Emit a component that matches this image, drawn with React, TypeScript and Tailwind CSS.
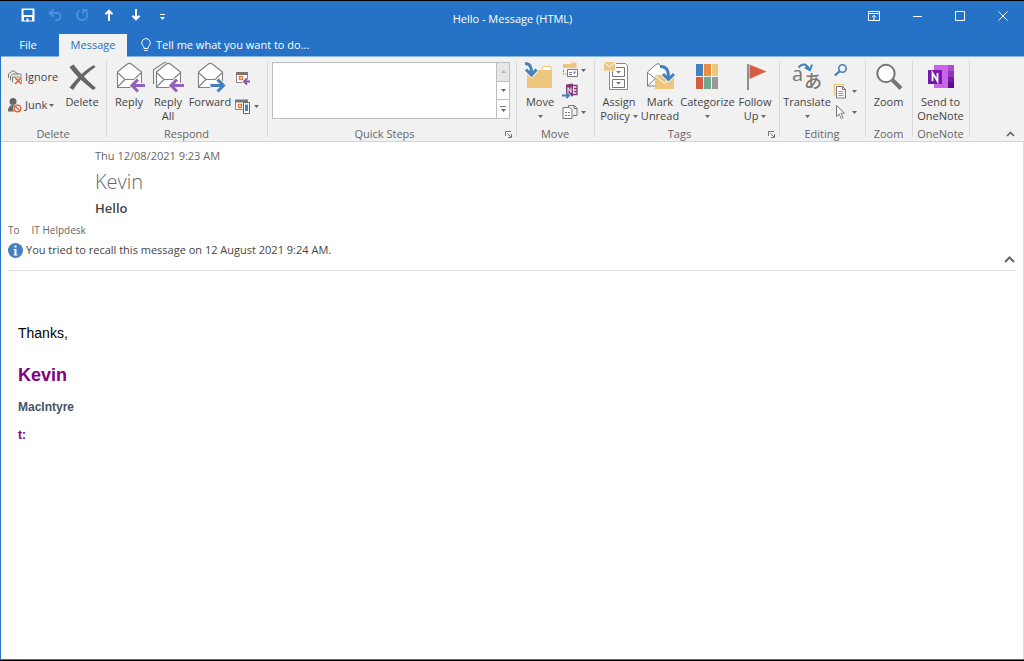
import { ReactNode } from 'react';

function Caret({ className = '' }: { className?: string }) {
  return (
    <svg viewBox="0 0 5 3" className={`w-[5px] h-[3px] shrink-0 ${className}`} fill="#666">
      <path d="M0 0h5L2.5 3z" />
    </svg>
  );
}

function Svg({ children, className = 'size-8' }: { children: ReactNode; className?: string }) {
  return (
    <svg viewBox="0 0 32 32" className={`${className} shrink-0 overflow-visible`} fill="none" aria-hidden="true">
      {children}
    </svg>
  );
}

function Small({ children, className = 'size-4' }: { children: ReactNode; className?: string }) {
  return (
    <svg viewBox="0 0 16 16" className={`${className} shrink-0`} fill="none" aria-hidden="true">
      {children}
    </svg>
  );
}

function Envelope() {
  return (
    <g stroke="#808080" strokeWidth="1.1" strokeLinejoin="round">
      <path d="M4.5 11 14 3.2q2.3-1.7 4.6 0L28.5 11v15.5h-24z" fill="#fff" />
      <path d="M4.5 11.5 12 18.5h9l7.5-7" />
      <path d="m4.5 26 7.5-7.5" />
    </g>
  );
}

function LeftArrow() {
  return (
    <>
      <path d="M32 24.500H19M25 18.500l-6 6 6 6" stroke="#f1f1f1" strokeWidth="5" />
      <path d="M32 24.500H19.500M25 18.500l-6 6 6 6" stroke="#9461b8" strokeWidth="3" />
    </>
  );
}

type BigProps = {
  icon: ReactNode;
  lines: string[];
  caret?: 'below' | 'inline';
  className: string;
};

function BigButton({ icon, lines, caret, className }: BigProps) {
  return (
    <button className={`flex flex-col items-center shrink-0 pt-1 hover:bg-[#c5c5c5] ${className}`}>
      {icon}
      <span className="mt-[2px] leading-[14px] text-center whitespace-nowrap">
        {lines.map((line, i) => (
          <span key={line} className="flex items-center justify-center gap-[3px]">
            {line}
            {caret === 'inline' && i === lines.length - 1 && <Caret />}
          </span>
        ))}
      </span>
      {caret === 'below' && <Caret className="mt-[6px]" />}
    </button>
  );
}

function SmallButton({ label, children, caret }: { label: string; children: ReactNode; caret?: boolean }) {
  return (
    <button aria-label={label} className="flex items-center gap-[3px] hover:bg-[#c5c5c5]">
      {children}
      {caret && <Caret />}
    </button>
  );
}

function Launcher({ label }: { label: string }) {
  return (
    <button aria-label={label} className="absolute right-[5px] bottom-[3px]">
      <svg viewBox="0 0 7 7" className="size-[7px]" fill="none" stroke="#777">
        <path d="M.5 5V.5H6M2.5 2.500 6 6M6.500 3v3.500H3" />
      </svg>
    </button>
  );
}

function Group({ title, className, launcher, children }: { title: string; className: string; launcher?: boolean; children: ReactNode }) {
  return (
    <section aria-label={title} className={`relative flex flex-col shrink-0 pr-[2px] ${className}`}>
      <div className="flex h-[70px]">{children}</div>
      <h2 className={`text-center leading-[14px] text-[#666] ${launcher ? 'pr-[14px]' : ''}`}>{title}</h2>
      {launcher && <Launcher label={`${title} options`} />}
      <div className="absolute right-0 top-1 bottom-1 w-px bg-[#d8d8d8]" />
    </section>
  );
}

function TitleBar() {
  const quick = 'flex items-center justify-center w-[27px] h-7';
  const control = 'flex items-center justify-center w-[43px] h-[30px]';
  return (
    <header className="grid grid-cols-[1fr_auto_1fr] h-[33px] text-white">
      <div className="flex pl-[13px]">
        <button aria-label="Save" className={quick}>
          <svg viewBox="0 0 14 14" className="size-[14px]" fill="none">
            <path d="M.5.500h13v13h-13z" fill="#fff" />
            <path d="M2.500 2h9v5h-9zM3 9h8v3.500H3z" fill="#2572c6" />
            <path d="M5.500 10.500h2v3h-2z" fill="#fff" />
          </svg>
        </button>
        <button aria-label="Undo" className={quick} disabled>
          <svg viewBox="0 0 14 14" className="size-[14px]" fill="none" stroke="#4a93dc" strokeWidth="1.800">
            <path d="M5.500 1.500 1.500 5l4 3.500M2 5h7a3.500 3.500 0 0 1 0 7H7.500" />
          </svg>
        </button>
        <button aria-label="Redo" className={quick} disabled>
          <svg viewBox="0 0 14 14" className="size-[14px]" fill="none" stroke="#4a93dc" strokeWidth="1.800">
            <path d="M4.500 2.500A5.200 5.200 0 1 0 10 2.700M8 6V2h4.500" />
          </svg>
        </button>
        <button aria-label="Previous item" className={quick}>
          <svg viewBox="0 0 12 12" className="size-3" fill="none" stroke="#fff" strokeWidth="2">
            <path d="M6 12V1.500M2.500 5.200 6 1.700l3.500 3.500" />
          </svg>
        </button>
        <button aria-label="Next item" className={quick}>
          <svg viewBox="0 0 12 12" className="size-3" fill="none" stroke="#fff" strokeWidth="2">
            <path d="M6 0v10.500M2.500 6.800 6 10.300l3.500-3.500" />
          </svg>
        </button>
        <button aria-label="Customize Quick Access Toolbar" className={quick}>
          <svg viewBox="0 0 5 6" className="mt-1 w-[5px] h-[6px]" fill="#fff">
            <path d="M0 0h5v1H0zM0 3h5L2.500 6z" />
          </svg>
        </button>
      </div>
      <h1 className="leading-9">Hello - Message (HTML)</h1>
      <div className="flex justify-end">
        <button aria-label="Ribbon display options" className={control}>
          <svg viewBox="0 0 12 10" className="w-3 h-[10px]" fill="none" stroke="#fff">
            <path d="M.5.5h11v9H.500zM.5 2.500h11M6 9V4.500M4 6.200l2-2 2 2" />
          </svg>
        </button>
        <button aria-label="Minimize" className={control}>
          <svg viewBox="0 0 10 10" className="size-[10px]" stroke="#fff">
            <path d="M1 5.500h9" />
          </svg>
        </button>
        <button aria-label="Maximize" className={control}>
          <svg viewBox="0 0 10 10" className="size-[10px]" fill="none" stroke="#fff">
            <path d="M.5.5h9v9H.500z" />
          </svg>
        </button>
        <button aria-label="Close" className={control}>
          <svg viewBox="0 0 10 10" className="size-[10px]" stroke="#fff">
            <path d="m.5.500 9 9M9.500.500l-9 9" />
          </svg>
        </button>
      </div>
    </header>
  );
}

function Tabs() {
  return (
    <nav className="flex h-[23px] text-white">
      <button className="w-[58px] pr-1 border-b border-[#8ab4e3]">File</button>
      <button className="w-[68px] bg-[#f1f1f1] text-[#2572c6]">Message</button>
      <button className="flex items-center flex-1 gap-1 pl-[13px] border-b border-[#8ab4e3]">
        <svg viewBox="0 0 12 14" className="w-3 h-[14px]" fill="none" stroke="#fff">
          <path d="M4 10.500V9C3 8 1.800 6.800 1.800 4.800a4.200 4.200 0 0 1 8.400 0C10.200 6.800 9 8 8 9v1.500zM4.300 12.500h3.400" />
        </svg>
        Tell me what you want to do...
      </button>
    </nav>
  );
}

function DeleteGroup() {
  return (
    <Group title="Delete" className="w-[106px]">
      <div className="flex flex-col shrink-0 w-[59px] pl-[6px] pt-3 gap-3">
        <button className="flex items-center gap-[2px] h-4">
          <Small>
            <path d="M1.500 9V5L6 1.500l5 3.500" stroke="#777" />
            <path d="M3.500 11.500V7l2-2h8l1 2" stroke="#777" />
            <path d="M5.500 13.500V8h9v5" stroke="#777" />
            <path d="m8 8.500 6.500 6.500M14.500 8.500 8 15" stroke="#f1f1f1" strokeWidth="3" />
            <path d="m8 8.500 6.500 6.500M14.500 8.500 8 15" stroke="#d9603b" strokeWidth="1.600" />
          </Small>
          Ignore
        </button>
        <button className="flex items-center gap-[2px] h-4">
          <Small>
            <circle cx="6" cy="4.500" r="3.500" fill="#666" />
            <path d="M1 14.500q0-6.500 5-6.500 3 0 4 1.500L7 14.500z" fill="#666" />
            <circle cx="10.500" cy="11.500" r="4.500" fill="#f1f1f1" />
            <circle cx="10.500" cy="11.500" r="3.300" stroke="#d9603b" strokeWidth="1.300" />
            <path d="m8.200 9.200 4.600 4.600" stroke="#d9603b" strokeWidth="1.300" />
          </Small>
          Junk
          <Caret />
        </button>
      </div>
      <BigButton
        className="w-[44px]"
        lines={['Delete']}
        icon={
          <Svg>
            <path d="M3.500 6 7.500 3.500C12 9.500 20 18 30 27l-3 2C18 22 9 14 3.500 6z" fill="#666" />
            <path d="M28 4C19 9 11 17 3.500 26.500L7 29C13 20 20 12.500 29.500 6z" fill="#666" />
          </Svg>
        }
      />
    </Group>
  );
}

function RespondGroup() {
  return (
    <Group title="Respond" className="w-[161px]">
      <BigButton className="w-[40px] ml-[2px]" lines={['Reply']} icon={<Svg><Envelope /><LeftArrow /></Svg>} />
      <BigButton
        className="w-[38px]"
        lines={['Reply', 'All']}
        icon={
          <Svg>
            <path d="M1.500 23V8.500L12.500 1.500q1-.6 2 0" stroke="#808080" strokeWidth="1.1" />
            <Envelope />
            <LeftArrow />
          </Svg>
        }
      />
      <BigButton
        className="w-[46px]"
        lines={['Forward']}
        icon={
          <Svg>
            <Envelope />
            <path d="M16 24.500h13M23.500 18.500l6 6-6 6" stroke="#f1f1f1" strokeWidth="5" />
            <path d="M16.500 24.500H29M23.500 18.500l6 6-6 6" stroke="#4380bd" strokeWidth="3" />
          </Svg>
        }
      />
      <div className="flex flex-col items-start gap-3 pl-[2px] pt-[13px]">
        <SmallButton label="Reply with meeting">
          <Small>
            <path d="M1.500 3.500h11v9h-11z" fill="#fff" stroke="#888" />
            <path d="M1 2h12v3H1z" fill="#777" />
            <path d="M4.500 6.500h3v3h-3z" stroke="#e07b39" strokeWidth="1.400" />
            <path d="M15 11.500H9M12 8.500l-3 3 3 3" stroke="#f1f1f1" strokeWidth="3.500" />
            <path d="M15 11.500H9M12 8.500l-3 3 3 3" stroke="#8c50b0" strokeWidth="1.800" />
          </Small>
        </SmallButton>
        <SmallButton label="More respond actions" caret>
          <Small>
            <path d="M.5 2.500h12v9H.500z" fill="#fff" stroke="#888" />
            <path d="M0 1.500h13v3H0z" fill="#777" />
            <path d="M3.500 6.500h3v3h-3z" stroke="#e07b39" strokeWidth="1.400" />
            <path d="M8.500 4.500h6v11h-6z" fill="#fff" stroke="#666" />
            <path d="M10 6.500h3v6.500h-3z" fill="#4380bd" />
          </Small>
        </SmallButton>
      </div>
    </Group>
  );
}

function QuickStepsGroup() {
  const step = 'flex flex-col items-center justify-center flex-1 gap-[2px] border-l border-[#b9bfc2]';
  return (
    <Group title="Quick Steps" className="w-[249px]" launcher>
      <div className="flex flex-1 mt-[5px] mb-2 ml-1 mr-[5px] border border-[#b9bfc2] bg-white">
        <div className="flex-1" />
        <div className="flex flex-col w-[13px]">
          <button aria-label="Scroll up" className={`${step} bg-[#e6e6e6]`} disabled>
            <svg viewBox="0 0 5 3" className="w-[5px] h-[3px]" fill="#b5b5b5"><path d="M0 3h5L2.500 0z" /></svg>
          </button>
          <button aria-label="Scroll down" className={`${step} border-t`}><Caret /></button>
          <button aria-label="More quick steps" className={`${step} border-t`}>
            <span className="w-[6px] h-px bg-[#777]" />
            <Caret />
          </button>
        </div>
      </div>
    </Group>
  );
}

function MoveGroup() {
  return (
    <Group title="Move" className="w-[78px]">
      <BigButton
        className="w-[42px] ml-[2px]"
        lines={['Move']}
        caret="below"
        icon={
          <Svg>
            <path d="M3 9h14l2-4h8l1 3v19H3z" fill="#edc77e" />
            <path d="M18 9l1.500-3H26l1 3z" fill="#fff" />
            <path d="M1 2.500q7 0 6.500 9M2 8.500l5.500 5.500 5-5.500" stroke="#f1f1f1" strokeWidth="5" />
            <path d="M1 2.500q7 0 6.500 10M2 8.500l5.500 5.500 5-5.500" stroke="#4380bd" strokeWidth="3" />
          </Svg>
        }
      />
      <div className="flex flex-col items-start gap-[5px] pt-[5px] pl-[1px]">
        <SmallButton label="Rules" caret>
          <Small>
            <path d="M1 2h8l1-1.500h4.500V6H1z" fill="#edc77e" />
            <path d="M1.500 8v4h3" stroke="#888" strokeDasharray="2 1" />
            <path d="M5.500 7.500h10v7h-10z" fill="#fff" stroke="#777" />
            <path d="M11.500 9.500h2v2h-2z" fill="#4380bd" />
            <path d="M7 10.500h3M7 12.500h3" stroke="#888" />
          </Small>
        </SmallButton>
        <SmallButton label="Send to OneNote">
          <Small>
            <path d="M9.500 2.500H15v9H9.500M12 5.500h3M12 8.500h3" stroke="#80397b" strokeWidth="1.300" />
            <path d="m4 1.500 7-1v13l-7-1z" fill="#80397b" />
            <path d="M6 9.500v-5l3 5v-5" stroke="#fff" />
            <path d="M0 12.500h7M4.500 10l2.500 2.500L4.500 15" stroke="#f1f1f1" strokeWidth="3" />
            <path d="M0 12.500h7M4.500 10l2.500 2.500L4.500 15" stroke="#4380bd" strokeWidth="1.800" />
          </Small>
        </SmallButton>
        <SmallButton label="Actions" caret>
          <Small>
            <path d="M6.500 3.500v-2h6l2.500 3v7h-4M12 1.500v3h3" stroke="#777" />
            <path d="M1 3.500h6.500l2.500 2v9H1z" fill="#fff" stroke="#777" />
            <path d="M3 8.500h2M6 8.500h2M3 11.500h2M6 11.500h2" stroke="#777" />
          </Small>
        </SmallButton>
      </div>
    </Group>
  );
}

function TagsGroup() {
  return (
    <Group title="Tags" className="w-[185px]" launcher>
      <BigButton
        className="w-[44px] ml-[2px]"
        lines={['Assign', 'Policy']}
        caret="inline"
        icon={
          <Svg>
            <path d="M6.500 2.500h16l2 2v24h-18z" fill="#fff" stroke="#888" />
            <path d="M9.500 6.500h12v9h-12zM9.500 18.500h12v8h-12z" stroke="#777" />
            <path d="M13 10h5l-2.500 2.500zM13 21h5l-2.500 2.500z" fill="#777" />
            <path d="M0 0h13v10.500H0z" fill="#f1f1f1" />
            <path d="M1 1h11v8.500H1z" fill="#edc77e" />
            <path d="m1 1.500 5.500 4.500L12 1.500" stroke="#fff" />
          </Svg>
        }
      />
      <BigButton
        className="w-[38px]"
        lines={['Mark', 'Unread']}
        icon={
          <Svg>
            <path d="M3.500 11 12 3.500q2-1.700 4 0l8 7V25H3.500z" fill="#fff" stroke="#808080" />
            <path d="m3.500 11.500 7.500 6M3.500 25l7.500-7" stroke="#808080" />
            <path d="M11 14h19v14H11z" fill="#edc77e" />
            <path d="m11 14.500 9.500 8 9.500-8" stroke="#fff" />
            <path d="M16 5.500q8.500-1 8.500 10M19 13l5.500 5.500L30 13" stroke="#f1f1f1" strokeWidth="4.500" />
            <path d="M16 5.500q8.500-1 8.500 11M19 13l5.500 5.500L30 13" stroke="#4380bd" strokeWidth="3" />
          </Svg>
        }
      />
      <BigButton
        className="w-[57px]"
        lines={['Categorize']}
        caret="below"
        icon={
          <Svg>
            <path d="M4 3h7v12H4z" fill="#4380bd" />
            <path d="M12 3h7v12h-7z" fill="#e98c3f" />
            <path d="M20 3h6v12h-6z" fill="#edc77e" />
            <path d="M4 16h7v12H4z" fill="#d65f43" />
            <path d="M12 16h7v12h-7z" fill="#6ca892" />
            <path d="M20 16h6v12h-6z" fill="#999" />
          </Svg>
        }
      />
      <BigButton
        className="w-[38px]"
        lines={['Follow', 'Up']}
        caret="inline"
        icon={
          <Svg>
            <path d="M9 3v26" stroke="#777" strokeWidth="1.600" />
            <path d="m10.500 3.500 17 7-17 7.500z" fill="#d65f43" />
          </Svg>
        }
      />
    </Group>
  );
}

function EditingGroup() {
  return (
    <Group title="Editing" className="w-[86px]">
      <BigButton
        className="w-[50px] ml-[2px]"
        lines={['Translate']}
        caret="below"
        icon={
          <Svg>
            <text x="1" y="20" fontSize="20" fill="#777" fontFamily="Open Sans, sans-serif">a</text>
            <text x="13" y="27" fontSize="18" fill="#777" fontWeight="500" fontFamily="Noto Sans CJK JP, sans-serif">あ</text>
            <path d="M7.500 6.500q6-7 11 2M14 6.500l5 2.500 2-5.500" stroke="#4380bd" strokeWidth="2" />
          </Svg>
        }
      />
      <div className="flex flex-col items-start gap-[5px] pt-[5px] pl-[1px]">
        <SmallButton label="Find">
          <Small>
            <circle cx="9.500" cy="6.500" r="3.700" stroke="#4380bd" strokeWidth="1.600" />
            <path d="m6.800 9.200-5 4.300" stroke="#4380bd" strokeWidth="2.200" />
          </Small>
        </SmallButton>
        <SmallButton label="Related" caret>
          <Small>
            <path d="M1.500 13V1.500h9V3" stroke="#edc77e" strokeWidth="1.200" />
            <path d="M3.500 3.500h6l3 3v8.500h-9zM9.500 3.500v3h3" fill="#fff" stroke="#777" />
            <path d="M5.500 8.500h5M5.500 10.500h5M5.500 12.500h5" stroke="#999" />
          </Small>
        </SmallButton>
        <SmallButton label="Select" caret>
          <Small>
            <path d="M3.500 1.500v11l2.700-2.500 2 4.500 1.800-1-2-4.300h3.500z" fill="#fff" stroke="#777" />
          </Small>
        </SmallButton>
      </div>
    </Group>
  );
}

function Ribbon() {
  return (
    <div className="flex bg-[#f1f1f1] border-b border-[#d5d5d5] text-[#444]">
      <DeleteGroup />
      <RespondGroup />
      <QuickStepsGroup />
      <MoveGroup />
      <TagsGroup />
      <EditingGroup />
      <Group title="Zoom" className="w-[47px]">
        <BigButton
          className="flex-1"
          lines={['Zoom']}
          icon={
            <Svg>
              <circle cx="13" cy="12.500" r="8.700" fill="#fff" stroke="#777" strokeWidth="2" />
              <path d="m19.500 19 8.500 8.500" stroke="#777" strokeWidth="4" />
            </Svg>
          }
        />
      </Group>
      <Group title="OneNote" className="w-[57px]">
        <BigButton
          className="flex-1"
          lines={['Send to', 'OneNote']}
          icon={
            <Svg>
              <path d="M9 4h14v23H9z" fill="#ca64ea" />
              <path d="M23 4h6v6h-6z" fill="#ae4bd5" />
              <path d="M23 10h6v6h-6z" fill="#9332bf" />
              <path d="M23 16h6v5h-6z" fill="#7719aa" />
              <path d="M23 21h6v6h-6z" fill="#5c1187" />
              <path d="M3 9h14v14H3z" fill="#7719aa" />
              <path d="M7.500 20v-8l5 8v-8" stroke="#fff" strokeWidth="1.800" />
            </Svg>
          }
        />
      </Group>
      <div className="flex flex-1 items-end justify-end pr-[9px] pb-1">
        <button aria-label="Collapse the ribbon">
          <svg viewBox="0 0 9 6" className="w-[9px] h-[6px]" fill="none" stroke="#666" strokeWidth="1.700">
            <path d="m1 5 3.500-3.500L8 5" />
          </svg>
        </button>
      </div>
    </div>
  );
}

function MessageHeader() {
  return (
    <div className="mx-[7px] pt-[6px] pb-[7px] border-b border-[#e1e1e1] text-[#666]">
      <div className="pl-[87px]">
        <p className="leading-4">Thu 12/08/2021 9:23 AM</p>
        <p className="mt-1 text-[20px] leading-7 font-light">Kevin</p>
        <p className="mt-[2px] text-[13px] leading-5 font-semibold text-[#444]">Hello</p>
      </div>
      <dl className="flex gap-3 mt-1 text-[10px] leading-4">
        <dt>To</dt>
        <dd>IT Helpdesk</dd>
      </dl>
      <div className="flex justify-between h-[21px] mt-1">
        <p className="flex items-center gap-[3px] h-4 text-[#444]">
          <svg viewBox="0 0 15 15" className="size-[15px]">
            <circle cx="7.500" cy="7.500" r="7.500" fill="#4380bd" />
            <path d="M6.500 2.500h2v2h-2zM5.500 6h3v5.500h1v1h-4v-1h1V7h-1z" fill="#fff" />
          </svg>
          You tried to recall this message on 12 August 2021 9:24 AM.
        </p>
        <button aria-label="Collapse header" className="self-end pr-[1px]">
          <svg viewBox="0 0 11 7" className="w-[11px] h-[7px]" fill="none" stroke="#666" strokeWidth="2">
            <path d="m1 6 4.500-4.500L10 6" />
          </svg>
        </button>
      </div>
    </div>
  );
}

export default function App() {
  return (
    <div className="flex flex-col min-h-screen border-y border-black bg-[#2572c6] font-['Open_Sans',sans-serif] text-[11px]">
      <div className="flex flex-col flex-1 border-l border-b border-[#2572c6]">
        <TitleBar />
        <Tabs />
        <Ribbon />
        <main className="flex-1 bg-white border-r border-[#cfe0f2]">
          <MessageHeader />
          <article className="px-[17px] pt-[52px] font-['Liberation_Sans',sans-serif] text-[14px] text-black">
            <p className="leading-5">Thanks,</p>
            <p className="mt-5 text-[18px] leading-6 font-bold text-[#800080]">Kevin</p>
            <p className="mt-3 text-[12px] leading-4 font-bold text-[#44546a]">MacIntyre</p>
            <p className="mt-3 text-[12px] leading-4 font-bold text-[#800080]">t:</p>
          </article>
        </main>
      </div>
    </div>
  );
}
